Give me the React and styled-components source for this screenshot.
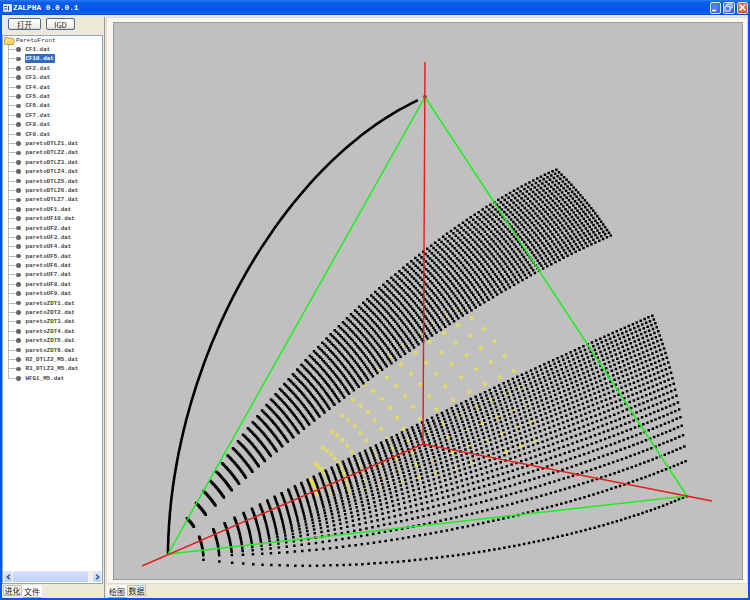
import React from "react";
import styled, { createGlobalStyle } from "styled-components";

const Global = createGlobalStyle`
  html, body { margin: 0; padding: 0; background: #ece9d8; }
  #root { width: 750px; height: 600px; overflow: hidden; }
`;

const Window = styled.div`
  width: 750px;
  height: 600px;
  box-sizing: border-box;
  display: flex;
  flex-direction: column;
  background: #ece9d8;
  border: 2px solid #0a55e0;
  border-top: 0;
  font-family: "Liberation Mono", monospace;
`;
const TitleBar = styled.div`
  height: 15px;
  margin: 0 -2px;
  flex: none;
  display: flex;
  align-items: center;
  padding: 0 2px 0 3px;
  background: linear-gradient(180deg, #2a7af0 0%, #0a5ce8 18%, #0254e6 70%, #0a62f0 90%, #0348c8 100%);
`;
const TitleText = styled.span`
  margin-left: 1px;
  color: #fff;
  font: bold 7.8px "Liberation Mono", monospace;
  white-space: pre;
  flex: 1;
`;
const WinButtons = styled.div`
  display: flex;
  gap: 2px;
`;
const WinButton = styled.div`
  width: 11.5px;
  height: 12px;
  box-sizing: border-box;
  border: 1px solid #d8e4fa;
  border-radius: 2px;
  background: ${(p) => (p.$close ? "radial-gradient(circle at 40% 40%, #f0906a, #d83c18)" : "radial-gradient(circle at 40% 40%, #5a8cf0, #2a5fdc)")};
  display: flex;
  align-items: center;
  justify-content: center;
`;
const Body = styled.div`
  flex: 1;
  min-height: 0;
  display: flex;
`;
const LeftColumn = styled.div`
  width: 101px;
  flex: none;
  display: flex;
  flex-direction: column;
`;
const Toolbar = styled.div`
  display: flex;
  gap: 5px;
  padding: 3px 0 0 6px;
  height: 17px;
  box-sizing: border-box;
  flex: none;
`;
const ToolButton = styled.div`
  width: ${(p) => p.$w}px;
  height: 12px;
  box-sizing: border-box;
  border: 1px solid #4a6a98;
  border-radius: 2px;
  background: linear-gradient(180deg, #fff, #f2f0e6 80%, #dcd8c8);
  display: flex;
  align-items: center;
  justify-content: center;
  font: 7.5px "Noto Sans CJK SC", "Liberation Mono", monospace;
  color: #222;
`;
const TreeBox = styled.div`
  margin-top: 3px;
  flex: 1;
  min-height: 0;
  box-sizing: border-box;
  border: 1px solid #8ba4c8;
  background: #fff;
  display: flex;
  flex-direction: column;
`;
const TreeList = styled.div`
  flex: 1;
  min-height: 0;
`;
const RootRow = styled.div`
  height: 8.9px;
  display: flex;
  align-items: center;
  font-size: 6px;
  color: #333;
  gap: 1px;
`;
const TreeRow = styled.div`
  height: 9.4px;
  display: flex;
  align-items: center;
  font-size: 5.85px;
  font-weight: bold;
  color: #444;
  white-space: pre;
`;
const Connector = styled.div`
  width: 8px;
  height: 100%;
  margin-left: 5px;
  flex: none;
  background:
    linear-gradient(#bbb, #bbb) 0 0 / 1px ${(p) => (p.$last ? "50%" : "100%")} no-repeat,
    linear-gradient(#bbb, #bbb) 0 50% / 100% 1px no-repeat;
`;
const Bullet = styled.div`
  width: 4.6px;
  height: 4.6px;
  border-radius: 50%;
  background: #666;
  flex: none;
`;
const ItemLabel = styled.span`
  margin-left: 4px;
  padding: 0 1px;
  line-height: 9px;
  background: ${(p) => (p.$selected ? "#316ac5" : "transparent")};
  color: ${(p) => (p.$selected ? "#fff" : "inherit")};
`;
const ScrollBar = styled.div`
  height: 11px;
  flex: none;
  margin: 0 0 1px;
  display: flex;
  align-items: stretch;
  background: #f3f1e6;
  padding: 0 1px;
`;
const ScrollArrow = styled.div`
  width: 8px;
  background: linear-gradient(180deg, #dfe9fc, #bcd0f5);
  border-radius: 1px;
  display: flex;
  align-items: center;
  justify-content: center;
`;
const ScrollThumb = styled.div`
  width: 75px;
  margin: 0 1px;
  background: linear-gradient(180deg, #d6e2fb, #bcd0f6);
  border-radius: 1px;
`;
const ScrollGap = styled.div`
  flex: 1;
`;
const TabStrip = styled.div`
  height: 14px;
  flex: none;
  display: flex;
  padding: 1px 0 0 ${(p) => p.$pad}px;
  box-sizing: border-box;
`;
const Tab = styled.div`
  width: ${(p) => (p.$active ? 20 : 19)}px;
  height: ${(p) => (p.$active ? 13 : 11)}px;
  box-sizing: border-box;
  background: ${(p) => (p.$active ? "#fbfaf4" : "#f6f4ea")};
  border: 1px solid ${(p) => (p.$active ? "#fbfaf4" : "#c8c4b0")};
  border-bottom: ${(p) => (p.$active ? "1.5px solid #f0a030" : "1px solid #c8c4b0")};
  display: flex;
  align-items: center;
  justify-content: center;
  font: 8px "Noto Sans CJK SC", sans-serif;
  color: #222;
`;
const Splitter = styled.div`
  width: 3px;
  flex: none;
  margin-top: 2px;
  background: linear-gradient(90deg, #ece9d8 33%, #9a9a8e 33%, #9a9a8e 66%, #ece9d8 66%);
`;
const RightColumn = styled.div`
  flex: 1;
  min-width: 0;
  display: flex;
  flex-direction: column;
`;
const CanvasFrame = styled.div`
  margin-top: 2px;
  flex: 1;
  min-height: 0;
  box-sizing: border-box;
  padding: 5px 5px 5px 7px;
  background: #f8f7f0;
  border: 1px solid #dedcd0;
`;
const Plot = styled.svg`
  display: block;
  width: 628px;
  height: 556px;
  background: #c0c0c0;
  outline: 1px solid #9a9a96;
`;

const project = (x, y, z) => [423 - 255 * x + 264 * y + 2 * z, 443 + 110 * x + 52 * y - 347 * z];
const fmt = (n) => n.toFixed(1);
const ROWS = 87;

function square(x, y, z, s) {
  const [px, py] = project(x, y, z);
  return `M${fmt(px - s / 2)} ${fmt(py - s / 2)}h${s}v${s}h-${s}z`;
}

function blackPoints() {
  let d = "";
  const levels = [];
  for (let k = 0; k <= 25; k++) levels.push(1 - k * 0.02);
  for (let k = 0; k <= 25; k++) levels.push(-k * 0.02);
  levels.forEach((c) => {
    const t = 0.5 * Math.acos(c);
    for (let k = 1; k <= ROWS; k++) {
      const x = Math.max(0, 1 - 0.008 * k - 0.00004 * k * k);
      const r = Math.sqrt(1 - x * x);
      d += square(x, r * Math.cos(t), r * Math.sin(t), 2.5);
    }
  });
  d += square(0, 0, 1, 3);
  return d;
}

function arcLine() {
  let d = "";
  for (let k = 0; k <= 120; k++) {
    const f = ((k / 120) * 88.4 * Math.PI) / 180;
    const [px, py] = project(Math.cos(f), 0, Math.sin(f));
    d += `${k ? "L" : "M"}${fmt(px)} ${fmt(py)}`;
  }
  return d;
}

function yellowPoints() {
  let d = "";
  const a = 0.465;
  const b = 0.43;
  for (let k = 1; k <= 14; k++) {
    const f = ((90 - (90 / 14) * k) * Math.PI) / 180;
    for (let j = 0; j < 10; j++) {
      const t = ((10 + (62 * j) / 9) * Math.PI) / 180;
      const [px, py] = project(a * Math.sin(f), b * Math.cos(f) * Math.cos(t), b * Math.cos(f) * Math.sin(t));
      d += `M${fmt(px - 1.3)} ${fmt(py)}a1.3 1.3 0 1 0 2.6 0a1.3 1.3 0 1 0 -2.6 0z`;
    }
  }
  return d;
}

const BLACK = blackPoints();
const ARC = arcLine();
const YELLOW = yellowPoints();

const items = [
  "CF1.dat", "CF10.dat", "CF2.dat", "CF3.dat", "CF4.dat", "CF5.dat", "CF6.dat", "CF7.dat", "CF8.dat", "CF9.dat",
  "paretoDTLZ1.dat", "paretoDTLZ2.dat", "paretoDTLZ3.dat", "paretoDTLZ4.dat", "paretoDTLZ5.dat", "paretoDTLZ6.dat", "paretoDTLZ7.dat",
  "paretoUF1.dat", "paretoUF10.dat", "paretoUF2.dat", "paretoUF3.dat", "paretoUF4.dat", "paretoUF5.dat", "paretoUF6.dat", "paretoUF7.dat", "paretoUF8.dat", "paretoUF9.dat",
  "paretoZDT1.dat", "paretoZDT2.dat", "paretoZDT3.dat", "paretoZDT4.dat", "paretoZDT5.dat", "paretoZDT6.dat",
  "R2_DTLZ2_M5.dat", "R3_DTLZ3_M5.dat", "WFG1_M5.dat",
];

const FolderIcon = () => (
  <svg width="11" height="9" viewBox="0 0 11 9" style={{ marginLeft: 1 }}>
    <path d="M0.5 2V8.5H9.5L10.5 3.5H9V2H4.5L3.5 1H1.5Z" fill="#f6d468" stroke="#a08830" strokeWidth="0.7" />
    <path d="M1.5 8L2.5 4H10" fill="none" stroke="#fff2b8" strokeWidth="0.7" />
  </svg>
);

const AppIcon = () => (
  <svg width="9" height="8" viewBox="0 0 9 8">
    <rect x="0.5" y="0.5" width="8" height="7" fill="#dfe6f2" stroke="#fff" strokeWidth="0.6" />
    <path d="M1.5 2.5H4M1.5 5H4M5.5 2V6.5" stroke="#234a90" strokeWidth="1" />
  </svg>
);

const ArrowGlyph = ({ dir }) => (
  <svg width="5" height="6" viewBox="0 0 5 6">
    <path d={dir === "l" ? "M3.8 0.8L1.3 3L3.8 5.2" : "M1.2 0.8L3.7 3L1.2 5.2"} fill="none" stroke="#2a4a90" strokeWidth="1.3" />
  </svg>
);

export default function App() {
  return (
    <>
      <Global />
      <Window>
        <TitleBar>
          <AppIcon />
          <TitleText>ZALPHA 0.0.0.1</TitleText>
          <WinButtons>
            <WinButton>
              <svg width="8" height="8" viewBox="0 0 8 8"><path d="M1 6.5H5" stroke="#fff" strokeWidth="1.6" /></svg>
            </WinButton>
            <WinButton>
              <svg width="9" height="9" viewBox="0 0 9 9"><path d="M3 2.5V1H8V5H6.5M1 3.2H6V8H1Z" fill="none" stroke="#fff" strokeWidth="1" /></svg>
            </WinButton>
            <WinButton $close>
              <svg width="9" height="9" viewBox="0 0 9 9"><path d="M1.5 1.5L7.5 7.5M7.5 1.5L1.5 7.5" stroke="#fff" strokeWidth="1.6" /></svg>
            </WinButton>
          </WinButtons>
        </TitleBar>
        <Body>
          <LeftColumn>
            <Toolbar>
              <ToolButton $w={33}>打开</ToolButton>
              <ToolButton $w={29}>IGD</ToolButton>
            </Toolbar>
            <TreeBox>
              <TreeList>
                <RootRow><FolderIcon />ParetoFront</RootRow>
                {items.map((name, i) => (
                  <TreeRow key={name}>
                    <Connector $last={i === items.length - 1} />
                    <Bullet />
                    <ItemLabel $selected={name === "CF10.dat"}>{name}</ItemLabel>
                  </TreeRow>
                ))}
              </TreeList>
              <ScrollBar>
                <ScrollArrow><ArrowGlyph dir="l" /></ScrollArrow>
                <ScrollThumb />
                <ScrollGap />
                <ScrollArrow><ArrowGlyph dir="r" /></ScrollArrow>
              </ScrollBar>
            </TreeBox>
            <TabStrip $pad={1}>
              <Tab>进化</Tab>
              <Tab $active>文件</Tab>
            </TabStrip>
          </LeftColumn>
          <Splitter />
          <RightColumn>
            <CanvasFrame>
              <Plot viewBox="114 22 628 556">
                <path d={YELLOW} fill="none" stroke="#eee440" strokeWidth="1.2" />
                <path d={BLACK} fill="#000" />
                <path d={ARC} fill="none" stroke="#000" strokeWidth="2.6" />
                <path d="M168 553L425 96L687 495Z" fill="none" stroke="#1cf01c" strokeWidth="1.5" />
                <path d="M142 565L423 443L712 500M423 443L425 61" fill="none" stroke="#e41c1c" strokeWidth="1.4" />
              </Plot>
            </CanvasFrame>
            <TabStrip $pad={1}>
              <Tab $active>绘图</Tab>
              <Tab>数据</Tab>
            </TabStrip>
          </RightColumn>
        </Body>
      </Window>
    </>
  );
}
